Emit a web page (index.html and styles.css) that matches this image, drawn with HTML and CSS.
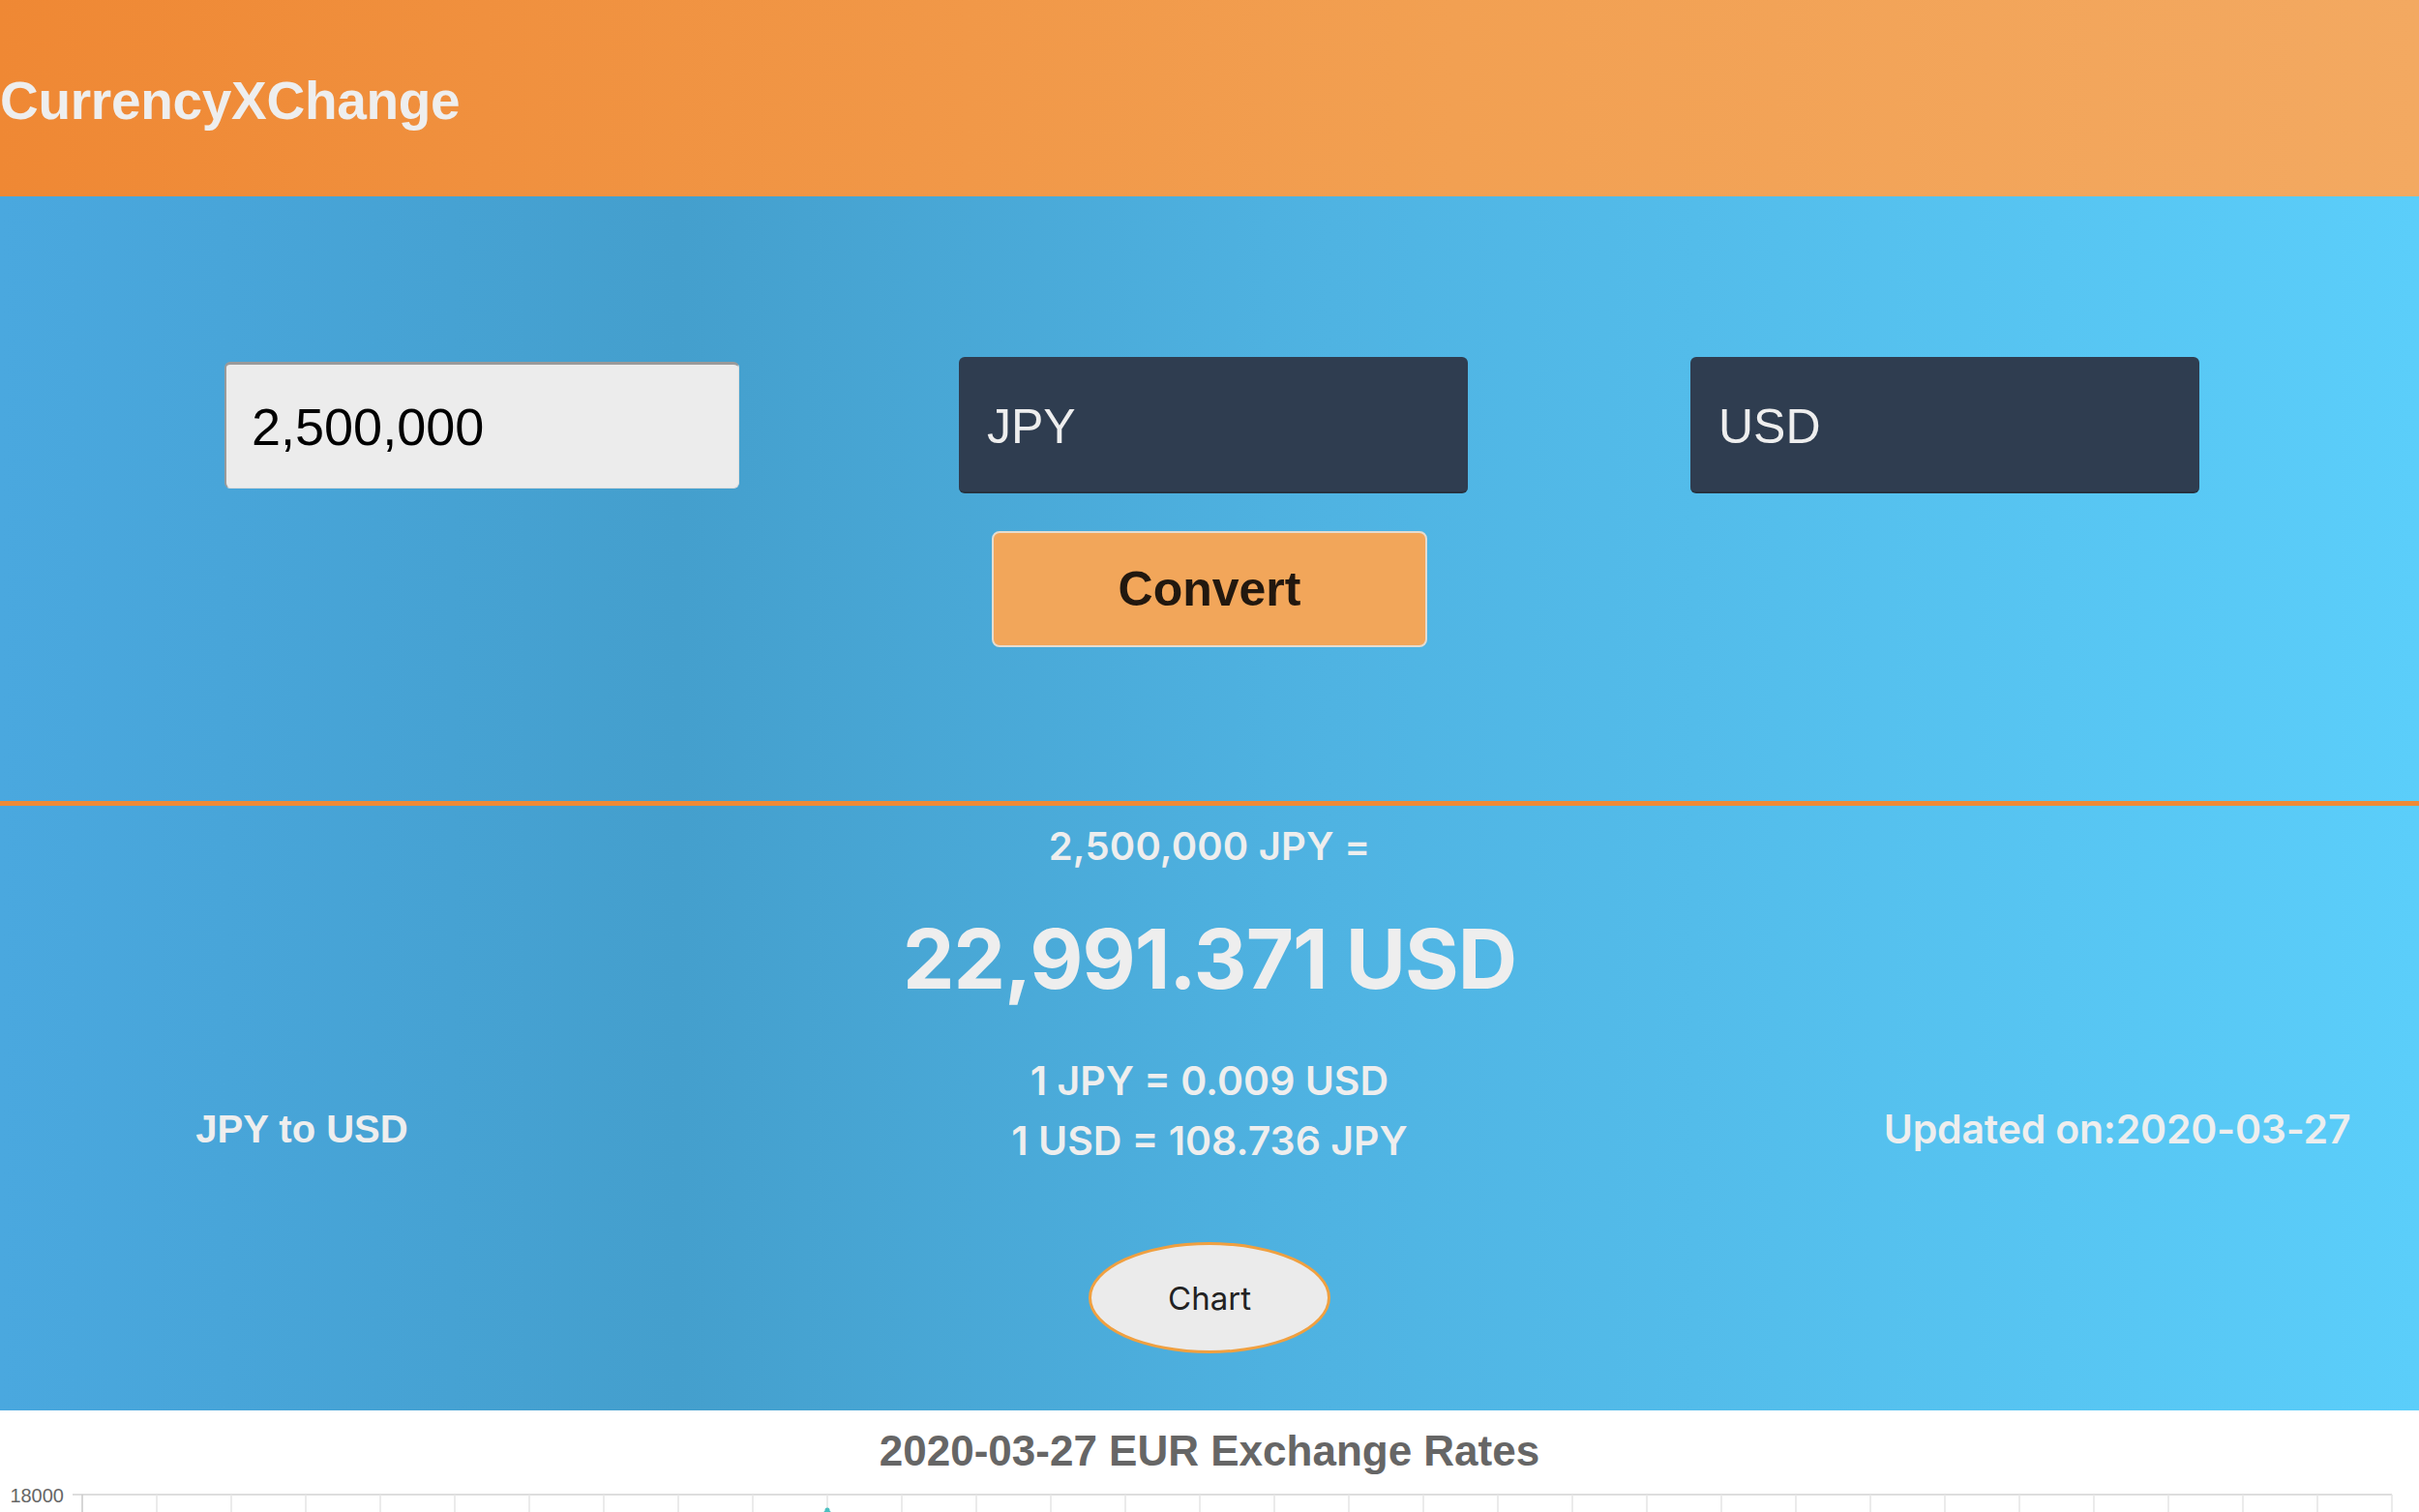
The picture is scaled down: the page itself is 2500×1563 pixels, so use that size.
FILE: index.html
```html
<!DOCTYPE html>
<html lang="en">
<head>
<meta charset="utf-8">
<title>CurrencyXChange</title>
<link rel="stylesheet" href="styles.css">
</head>
<body>
<header class="topbar">
  <h1 class="brand">CurrencyXChange</h1>
</header>

<section class="converter">
  <div class="fields">
    <div class="field"><input class="amount" type="text" value="2,500,000"></div>
    <div class="field"><div class="select">JPY</div></div>
    <div class="field"><div class="select">USD</div></div>
  </div>
  <button class="convert" type="button">Convert</button>
</section>

<div class="divider"></div>

<section class="result">
  <div class="side">JPY to USD</div>
  <div class="center">
    <p class="from">2,500,000 JPY =</p>
    <p class="big">22,991.371 USD</p>
    <p class="rate">1 JPY = 0.009 USD</p>
    <p class="rate">1 USD = 108.736 JPY</p>
  </div>
  <div class="side side-right">Updated on:2020-03-27</div>
  <div class="chart-btn-row">
    <button class="chart-btn" type="button">Chart</button>
  </div>
</section>

<section class="chart">
  <h2 class="chart-title">2020-03-27 EUR Exchange Rates</h2>
  <svg class="chart-svg" width="2500" height="40" viewBox="0 0 2500 40">
    <text x="66" y="27" class="axis-label" text-anchor="end">18000</text>
    <line x1="75" y1="19" x2="2472" y2="19" class="grid"/>
    <g class="vgrid">
      <line x1="85" y1="19" x2="85" y2="40" class="axis"/>
      <line x1="162" y1="19" x2="162" y2="40"/>
      <line x1="239" y1="19" x2="239" y2="40"/>
      <line x1="316" y1="19" x2="316" y2="40"/>
      <line x1="393" y1="19" x2="393" y2="40"/>
      <line x1="470" y1="19" x2="470" y2="40"/>
      <line x1="547" y1="19" x2="547" y2="40"/>
      <line x1="624" y1="19" x2="624" y2="40"/>
      <line x1="701" y1="19" x2="701" y2="40"/>
      <line x1="778" y1="19" x2="778" y2="40"/>
      <line x1="855" y1="19" x2="855" y2="40"/>
      <line x1="932" y1="19" x2="932" y2="40"/>
      <line x1="1009" y1="19" x2="1009" y2="40"/>
      <line x1="1086" y1="19" x2="1086" y2="40"/>
      <line x1="1163" y1="19" x2="1163" y2="40"/>
      <line x1="1240" y1="19" x2="1240" y2="40"/>
      <line x1="1317" y1="19" x2="1317" y2="40"/>
      <line x1="1394" y1="19" x2="1394" y2="40"/>
      <line x1="1471" y1="19" x2="1471" y2="40"/>
      <line x1="1548" y1="19" x2="1548" y2="40"/>
      <line x1="1625" y1="19" x2="1625" y2="40"/>
      <line x1="1702" y1="19" x2="1702" y2="40"/>
      <line x1="1779" y1="19" x2="1779" y2="40"/>
      <line x1="1856" y1="19" x2="1856" y2="40"/>
      <line x1="1933" y1="19" x2="1933" y2="40"/>
      <line x1="2010" y1="19" x2="2010" y2="40"/>
      <line x1="2087" y1="19" x2="2087" y2="40"/>
      <line x1="2164" y1="19" x2="2164" y2="40"/>
      <line x1="2241" y1="19" x2="2241" y2="40"/>
      <line x1="2318" y1="19" x2="2318" y2="40"/>
      <line x1="2395" y1="19" x2="2395" y2="40"/>
      <line x1="2472" y1="19" x2="2472" y2="40"/>
    </g>
    <polyline class="series" points="849,40 855,35 861,40"/>
    <circle class="point" cx="855" cy="35" r="2.5"/>
  </svg>
</section>
</body>
</html>
```

FILE: styles.css
```css
html, body {
  margin: 0;
  padding: 0;
}
body {
  width: 2500px;
  height: 1563px;
  overflow: hidden;
  background: #ffffff;
  font-family: "Liberation Sans", Arial, sans-serif;
}

/* header */
.topbar {
  height: 203px;
  display: flex;
  align-items: center;
  background: linear-gradient(to right, #ef8834 0%, #f2a052 60%, #f3a961 100%);
}
.brand {
  margin: 0;
  padding-top: 4px;
  font-family: "Liberation Sans", Arial, sans-serif;
  font-weight: 700;
  font-size: 55px;
  color: #eeeeee;
  letter-spacing: -0.3px;
}

/* shared blue background */
.converter,
.result {
  background: linear-gradient(to right, #4aa8df 0%, #449fcd 28%, #4fb3e2 55%, #5bcefa 100%);
}

/* converter */
.converter {
  height: 625px;
  box-sizing: border-box;
  padding-top: 166px;
  display: flex;
  flex-direction: column;
  align-items: center;
}
.fields {
  display: grid;
  grid-template-columns: repeat(3, 756px);
  justify-content: center;
  align-items: center;
  box-sizing: border-box;
  padding-left: 8px;
  height: 141px;
  width: 100%;
}
.field {
  display: flex;
  justify-content: center;
}
.amount {
  width: 532px;
  height: 131px;
  box-sizing: border-box;
  margin: 0;
  padding: 0 0 0 26px;
  background: #ececec;
  border-top: 3px solid #9a9a9a;
  border-left: 2px solid #9a9a9a;
  border-right: 1px solid #dddddd;
  border-bottom: 1px solid #dddddd;
  border-radius: 6px;
  font-family: "Liberation Sans", Arial, sans-serif;
  font-size: 54px;
  color: #000000;
  outline: none;
}
.select {
  width: 526px;
  height: 141px;
  box-sizing: border-box;
  padding-left: 29px;
  padding-top: 4px;
  display: flex;
  align-items: center;
  background: #2f3d50;
  border-bottom: 2px solid #27323f;
  border-radius: 6px;
  font-family: "Liberation Sans", Arial, sans-serif;
  font-size: 50px;
  color: #eeeeee;
}
.convert {
  margin-top: 39px;
  width: 450px;
  height: 120px;
  background: #f2a65a;
  border: 2px solid #e6dccf;
  border-radius: 8px;
  font-family: "Liberation Sans", Arial, sans-serif;
  font-weight: 700;
  font-size: 50px;
  color: #22180f;
  cursor: pointer;
}

/* divider */
.divider {
  height: 5px;
  background: #ef8a36;
}

/* result */
.result {
  height: 625px;
  box-sizing: border-box;
  padding-top: 18px;
  display: grid;
  grid-template-columns: 1fr 1252px 1fr;
  grid-template-rows: auto auto;
  align-content: start;
  color: #eeeeee;
}
.center {
  text-align: center;
  font-family: Inter, "Liberation Sans", sans-serif;
  font-weight: 600;
}
.center p {
  margin: 0;
}
.from {
  font-size: 40px;
  line-height: 48px;
  letter-spacing: 0.2px;
}
.big {
  margin-top: 43px !important;
  font-size: 85px;
  font-weight: 700;
  line-height: 100px;
  letter-spacing: -1px;
}
.rate {
  font-size: 41px;
  line-height: 62px;
  letter-spacing: 0;
}
.big + .rate {
  margin-top: 44px !important;
}
.side {
  align-self: end;
  margin-bottom: 12px;
  text-align: center;
  font-family: "Liberation Sans", Arial, sans-serif;
  font-weight: 700;
  font-size: 40px;
  line-height: 62px;
}
.side-right {
  font-family: Inter, "Liberation Sans", sans-serif;
  font-weight: 600;
  font-size: 41px;
  letter-spacing: -0.2px;
}
.chart-btn-row {
  grid-column: 1 / 4;
  display: flex;
  justify-content: center;
  padding-top: 74px;
}
.chart-btn {
  width: 250px;
  height: 115px;
  background: #ebebeb;
  border: 3px solid #f0a040;
  border-radius: 50%;
  font-family: Inter, "Liberation Sans", sans-serif;
  font-weight: 400;
  font-size: 33px;
  color: #222222;
  cursor: pointer;
}

/* chart */
.chart {
  background: #ffffff;
  padding-top: 16px;
}
.chart-title {
  margin: 0;
  text-align: center;
  font-family: "Liberation Sans", Arial, sans-serif;
  font-weight: 700;
  font-size: 44px;
  line-height: 52px;
  color: #666666;
}
.chart-svg {
  display: block;
}
.axis-label {
  font-family: "Liberation Sans", Arial, sans-serif;
  font-size: 20px;
  fill: #666666;
}
.grid {
  stroke: #dddddd;
  stroke-width: 2;
}
.vgrid line {
  stroke: #e4e4e4;
  stroke-width: 1.5;
}
.vgrid .axis {
  stroke: #c8c8c8;
}
.series {
  fill: none;
  stroke: #4bc0c0;
  stroke-width: 2;
}
.point {
  fill: #4bc0c0;
}
```
